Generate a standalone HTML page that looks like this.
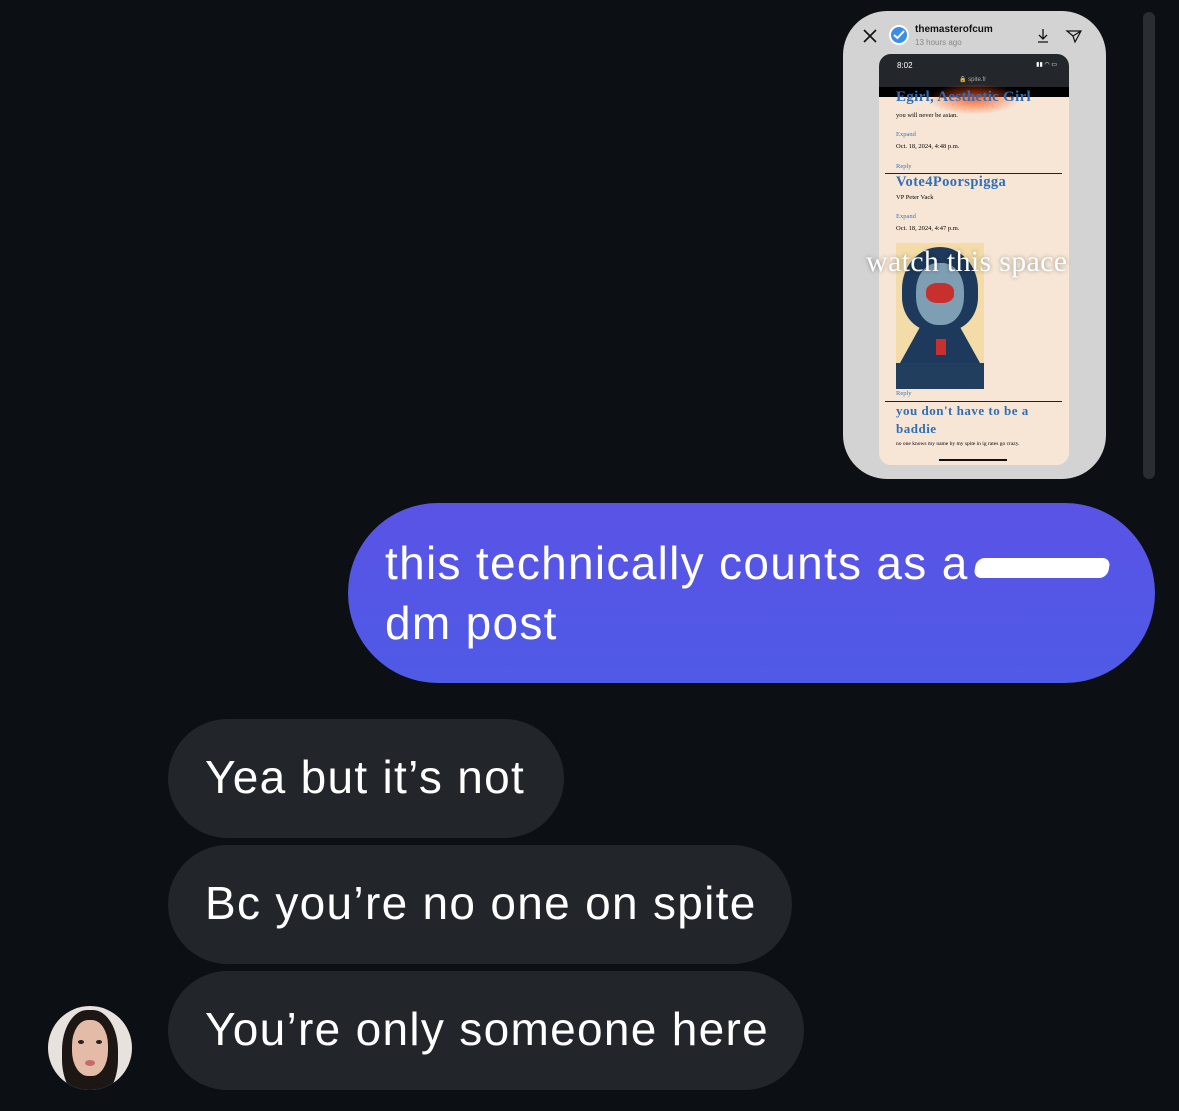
<!DOCTYPE html>
<html><head><meta charset="utf-8"><style>
html,body{margin:0;padding:0;background:#0c0f13;width:1179px;height:1111px;overflow:hidden;font-family:"Liberation Sans",sans-serif;position:relative}
.abs{position:absolute}
.card{left:843px;top:11px;width:263px;height:468px;background:#d3d3d3;border-radius:44px}
.phone{left:879px;top:54px;width:190px;height:411px;background:#f7e6d6;border-radius:12px;overflow:hidden}
.serif{font-family:"Liberation Serif",serif}
.bubble{border-radius:60px;color:#fff;font-size:46px}
.gray{background:#222529}
.t{position:absolute;left:205px;font-size:46px;color:#fff;letter-spacing:1.3px;white-space:nowrap}
.p{position:absolute;left:17px;white-space:nowrap;color:#000}
.bl{color:#2f6fb5;font-weight:bold}
.sm{font-size:6.5px}
.lk{font-size:6.5px;color:#3a78c0}
</style></head><body>
<div class="abs" style="left:1143px;top:12px;width:12px;height:467px;background:#2a2d31;border-radius:6px"></div>
<div class="abs card"></div>
<svg class="abs" style="left:862px;top:28px" width="16" height="16"><path d="M2 2L14 14M14 2L2 14" stroke="#111" stroke-width="1.6"/></svg>
<div class="abs" style="left:889px;top:25px;width:20px;height:20px;border-radius:50%;background:#3a8ee8;border:2px solid #fff;box-sizing:border-box"></div>
<svg class="abs" style="left:893px;top:30px" width="12" height="10"><path d="M1 5L4.5 8L11 1" stroke="#fff" stroke-width="2" fill="none"/></svg>
<div class="abs" style="left:915px;top:24px;font-size:10px;font-weight:bold;color:#111">themasterofcum</div>
<div class="abs" style="left:915px;top:38px;font-size:8px;color:#888">13 hours ago</div>
<svg class="abs" style="left:1035px;top:28px" width="50" height="16"><path d="M8 1V11M4 7L8 11L12 7M3 14H13" stroke="#111" stroke-width="1.3" fill="none"/><path d="M32 3L46 3L40 14L38 8Z M38 8L46 3" stroke="#111" stroke-width="1.2" fill="none"/></svg>
<div class="abs phone serif">
 <div style="position:absolute;left:0;top:0;width:190px;height:34px;background:#23262a;color:#fff;font-size:8px;font-family:'Liberation Sans',sans-serif"><span style="position:absolute;left:18px;top:7px">8:02</span><span style="position:absolute;left:80px;top:22px;font-size:6px;color:#aaa">🔒 spite.fr</span><span style="position:absolute;right:12px;top:7px;font-size:6px">▮▮ ◠ ▭</span></div>
 <div style="position:absolute;left:0;top:33px;width:190px;height:10px;background:#000"></div>
 <div style="position:absolute;left:45px;top:28px;width:100px;height:34px;background:radial-gradient(ellipse,rgba(255,80,20,.85),rgba(255,60,0,0) 65%)"></div>
 <div class="p bl" style="top:35px;font-size:15px;letter-spacing:.3px">Egirl, Aesthetic Girl</div>
 <div class="p sm" style="top:58px">you will never be asian.</div>
 <div class="p lk" style="top:77px">Expand</div>
 <div class="p sm" style="top:89px">Oct. 18, 2024, 4:48 p.m.</div>
 <div class="p lk" style="top:109px">Reply</div>
 <div style="position:absolute;left:6px;top:119px;width:177px;border-top:1px solid #222"></div>
 <div class="p bl" style="top:120px;font-size:14.5px;letter-spacing:.4px">Vote4Poorspigga</div>
 <div class="p sm" style="top:140px">VP Peter Vack</div>
 <div class="p lk" style="top:159px">Expand</div>
 <div class="p sm" style="top:171px">Oct. 18, 2024, 4:47 p.m.</div>
 <div style="position:absolute;left:17px;top:189px;width:88px;height:146px;background:#f3dca8;overflow:hidden">
   <div style="position:absolute;left:6px;top:4px;width:76px;height:84px;border-radius:50% 50% 40% 40%;background:#1d3a5c"></div>
   <div style="position:absolute;left:20px;top:20px;width:48px;height:62px;border-radius:45%;background:#7e9fb3"></div>
   <div style="position:absolute;left:30px;top:40px;width:28px;height:20px;background:#c7302c;border-radius:40%"></div>
   <div style="position:absolute;left:4px;top:84px;width:80px;height:36px;background:#1d3a5c;clip-path:polygon(25% 0,75% 0,100% 100%,0 100%)"></div>
   <div style="position:absolute;left:40px;top:96px;width:10px;height:16px;background:#c7302c"></div>
   <div style="position:absolute;left:0;bottom:0;width:88px;height:26px;background:#213e5e"></div>
 </div>
 <div class="p lk" style="top:336px">Reply</div>
 <div style="position:absolute;left:6px;top:347px;width:177px;border-top:1px solid #222"></div>
 <div class="p bl" style="top:348px;font-size:13px;line-height:18px;letter-spacing:.5px;white-space:normal;width:165px">you don't have to be a baddie</div>
 <div class="p" style="top:385px;font-size:5.5px;line-height:11px;white-space:normal;width:155px">no one knows my name by my spite in ig rates go crazy.</div>
 <div style="position:absolute;left:60px;bottom:4px;width:68px;height:2px;background:#111"></div>
</div>
<div class="abs serif" style="left:866px;top:245px;font-size:30px;color:#fff;text-shadow:0 0 4px rgba(0,0,0,.4);white-space:nowrap;letter-spacing:.3px">watch this space</div>

<div class="abs bubble" style="left:348px;top:503px;width:807px;height:180px;border-radius:90px;background:linear-gradient(#5a53e6,#4f5ae6)"></div>
<div class="abs" style="left:385px;top:533px;font-size:46px;color:#fff;line-height:60px;letter-spacing:1.3px;white-space:nowrap">this technically counts as a<br>dm post</div>
<div class="abs" style="left:975px;top:558px;width:134px;height:20px;background:#fff;border-radius:8px;transform:skewX(-10deg)"></div>

<div class="abs bubble gray" style="left:168px;top:719px;width:396px;height:119px"></div>
<div class="t" style="top:750px">Yea but it’s not</div>
<div class="abs bubble gray" style="left:168px;top:845px;width:624px;height:119px"></div>
<div class="t" style="top:876px">Bc you’re no one on spite</div>
<div class="abs bubble gray" style="left:168px;top:971px;width:636px;height:119px"></div>
<div class="t" style="top:1002px">You’re only someone here</div>

<div class="abs" style="left:48px;top:1006px;width:84px;height:84px;border-radius:50%;background:#e8e2de;overflow:hidden">
 <div style="position:absolute;left:14px;top:4px;width:56px;height:90px;border-radius:45%;background:#1c1715"></div>
 <div style="position:absolute;left:24px;top:14px;width:36px;height:56px;border-radius:45%;background:#e3bba6"></div>
 <div style="position:absolute;left:30px;top:34px;width:6px;height:4px;background:#222;border-radius:50%"></div>
 <div style="position:absolute;left:48px;top:34px;width:6px;height:4px;background:#222;border-radius:50%"></div>
 <div style="position:absolute;left:37px;top:54px;width:10px;height:6px;background:#c86a6a;border-radius:50%"></div>
</div>
</body></html>
